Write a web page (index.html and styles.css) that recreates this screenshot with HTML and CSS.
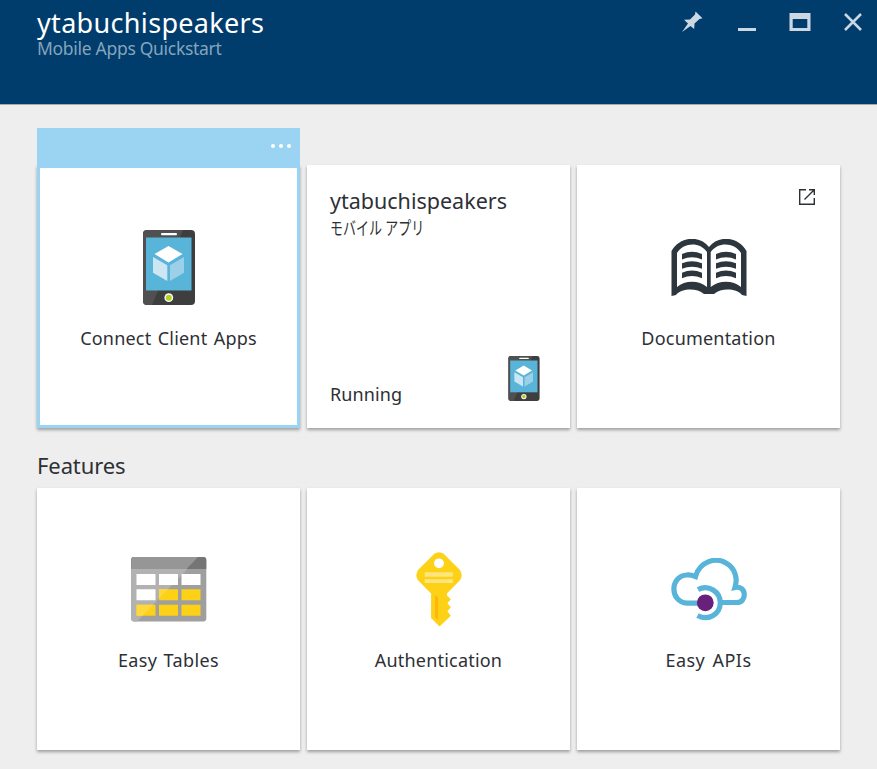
FILE: index.html
```html
<!DOCTYPE html>
<html lang="ja">
<head>
<meta charset="utf-8">
<title>ytabuchispeakers</title>
<link rel="stylesheet" href="styles.css">
</head>
<body>
<svg class="defs" width="0" height="0" aria-hidden="true">
  <symbol id="phone" viewBox="0 0 52 75">
    <rect width="52" height="75" rx="4" fill="#3e3e3e"/>
    <path d="M4 0H40L9 75H4a4 4 0 0 1-4-4V4a4 4 0 0 1 4-4z" fill="#505050"/>
    <rect x="3" y="7.500" width="45.500" height="53" fill="#59b4d9"/>
    <rect x="18" y="3" width="16" height="2.200" rx="1" fill="#fff"/>
    <path d="M25.500 16L39.500 24L25.500 32.500L11.500 24z" fill="#fff"/>
    <path d="M10 27L24.300 35.300V51L10 42.700z" fill="#cde6f4"/>
    <path d="M41 27L27 35.300V51L41 42.700z" fill="#9bd0e8"/>
    <circle cx="25.800" cy="67.700" r="4.400" fill="#fff"/>
    <circle cx="25.800" cy="67.700" r="3" fill="#b0d02b"/>
  </symbol>
</svg>
<header class="header">
  <div class="heading">
    <h1 class="title">ytabuchispeakers</h1>
    <p class="subtitle">Mobile Apps Quickstart</p>
  </div>
  <div class="controls">
    <svg class="pin" width="22" height="22" viewBox="0 0 22 22"><path d="M14.500 0.500L21.500 7.200L18.500 8L13.500 12.500L13.200 18L9.500 15L1 21L7 12.500L3 8.800L9 8.500L14 3.500z" fill="#ccd8e1"/></svg>
    <svg width="18" height="22" viewBox="0 0 18 22"><path d="M0 17H18V20H0z" fill="#ccd8e1"/></svg>
    <svg width="22" height="22" viewBox="0 0 22 22"><path d="M.5 2H21.500V20H.5zM3.700 8V17H18.300V8z" fill="#ccd8e1" fill-rule="evenodd"/></svg>
    <svg width="18" height="22" viewBox="0 0 18 22"><path d="M1 3L17 19M17 3L1 19" stroke="#ccd8e1" stroke-width="2.500"/></svg>
  </div>
</header>
<main class="content">
  <section class="grid">
    <article class="card selected">
      <div class="card-bar"><i></i><i></i><i></i></div>
      <svg class="icon phone" width="52" height="75"><use href="#phone"/></svg>
      <span class="label connect">Connect Client Apps</span>
    </article>
    <article class="card app">
      <h2 class="app-title">ytabuchispeakers</h2>
      <p class="app-type"><span>モバイル アプリ</span></p>
      <div class="app-foot">
        <span class="running">Running</span>
        <svg width="32" height="46" viewBox="0 0 32 46"><use href="#phone" width="32" height="45"/></svg>
      </div>
    </article>
    <article class="card">
      <svg class="external" width="18" height="18" viewBox="0 0 18 18" fill="none" stroke="#2d3035" stroke-width="1.400"><path d="M8 1.700H1.700V16.300H16.300V10M11 1.700H16.300V7M16 2L6.500 11.500"/></svg>
      <svg class="icon book" width="76" height="58" viewBox="0 0 76 58">
        <path d="M.5 12C9-3 29-4 38 8C47-4 67-3 75.500 12V57L71 56C65 49 50 49 43 55H33C26 49 11 49 5 56L.5 57z" fill="#2d363c"/>
        <path d="M6 14C13 3 29 3 36 13V48C28 41 14 41 6 48zM39.700 13C47 3 63 3 70 14V48C62 41 48 41 39.700 48z" fill="#fff"/>
        <path id="lines" d="M11 15Q21 10.500 31 15V20.500Q21 16 11 20.500zM11 24.300Q21 20 31 24.300V29.800Q21 25.500 11 29.800zM11 33.700Q21 29.500 31 33.700V39.200Q21 35 11 39.200z" fill="#2d363c"/>
        <use href="#lines" x="34"/>
      </svg>
      <span class="label documentation">Documentation</span>
    </article>
  </section>
  <h2 class="section-title">Features</h2>
  <section class="grid features">
    <article class="card">
      <svg class="icon table" width="76" height="65" viewBox="0 0 76 65">
        <rect x=".3" width="75" height="64.500" rx="3" fill="#9f9f9f"/>
        <path d="M3 0H68L6 64.500H3a3 3 0 0 1-3-3V3a3 3 0 0 1 3-3z" fill="#b2b2b2"/>
        <path d="M.3 12V3a3 3 0 0 1 3-3H72.300a3 3 0 0 1 3 3V12z" fill="#757575"/>
        <path d="M.3 12V3a3 3 0 0 1 3-3H67L55.500 12z" fill="#969696"/>
        <path d="M5.500 17H24.500V28H5.500zM28 17H47V28H28zM50.500 17H69.500V28H50.500zM5.500 32.300H24.500V43.300H5.500z" fill="#fff"/>
        <path d="M28 32.300H47V43.300H28zM50.500 32.300H69.500V43.300H50.500zM5.500 47.700H24.500V58.700H5.500zM28 47.700H47V58.700H28zM50.500 47.700H69.500V58.700H50.500z" fill="#fcd116"/>
        <path d="M5.500 47.700H22L11.500 58.700H5.500zM28 32.300H37L28 41.300z" fill="#ffd83e"/>
      </svg>
      <span class="label tables">Easy Tables</span>
    </article>
    <article class="card">
      <svg class="icon key" width="48" height="75" viewBox="0 0 48 76">
        <path d="M19 2Q24-1.500 29 2L45 18Q49 23.500 45 29L32 42V44L36 48L32.500 52L36 56L32.500 60L36 64.500L24.500 75.500L16 67V42L3 29Q-1 23.500 3 18z" fill="#fcd116"/>
        <circle cx="24" cy="11.500" r="5" fill="#fff"/>
        <path d="M9.500 20.500H38V25H9.500zM9.500 27.500H38V31.500H9.500z" fill="#ffe57d"/>
        <path d="M20 44L23 45.500V69L20 66z" fill="#ffb510"/>
      </svg>
      <span class="label auth">Authentication</span>
    </article>
    <article class="card">
      <svg class="icon cloud" width="76" height="64" viewBox="0 0 76 64" fill="none" stroke="#59b4d9" stroke-width="5.200">
        <path d="M28 45.200H16C-1.500 44 -1.500 18 16 17C19 16.800 21 17.200 24.500 18.500C29 3 45-1 55 5C64 10 67 20 64 29.500C76 27 76 44.500 66 44.500H49"/>
        <path d="M27 31.500C38 26 49 34 49.300 44.500C49.300 56 38 63.500 26.500 57.500"/>
        <circle cx="34.300" cy="44.800" r="8.400" fill="#68217a" stroke="none"/>
      </svg>
      <span class="label apis">Easy APIs</span>
    </article>
  </section>
</main>
</body>
</html>
```

FILE: styles.css
```css
* { box-sizing: border-box; }
body {
  margin: 0;
  min-height: 769px;
  background: #eee;
  color: #2d3035;
  font-family: "Noto Sans", "Noto Sans CJK JP", sans-serif;
}
h1, h2, p { margin: 0; font-weight: 400; white-space: nowrap; }
svg { display: block; flex: none; }
.defs { position: absolute; }

.header {
  display: flex;
  justify-content: space-between;
  height: 105px;
  padding: 8px 15px 0 37px;
  background: #003c6c;
  border-bottom: 1px solid #aaa9ac;
}
.title { color: #fff; font-size: 27px; line-height: 30px; letter-spacing: .32px; }
.subtitle { color: #84a5bc; font-size: 17.5px; line-height: 20px; letter-spacing: -.3px; }
.controls { display: flex; gap: 33px; padding-top: 3px; }
.pin { margin-right: 2px; }

.content { padding: 60px 37px 0; }
.grid { display: grid; grid-template-columns: repeat(3, 263px); gap: 7px; }
.card {
  position: relative;
  display: flex;
  flex-direction: column;
  align-items: center;
  height: 263px;
  background: #fff;
  box-shadow: 0 2px 3px rgba(0, 0, 0, .34);
}
.features .card { height: 262px; }
.selected { border: 3px solid #9bd4f3; border-top: 0; }
.card-bar {
  position: absolute;
  top: -37px;
  left: -3px;
  display: flex;
  justify-content: flex-end;
  gap: 4px;
  width: 263px;
  height: 40px;
  padding: 16px 9px 0;
  background: #9bd4f3;
}
.card-bar i { width: 4px; height: 4px; border-radius: 50%; background: #fff; }

.icon { margin-top: 65px; }
.book { margin-top: 74px; }
.table { margin-top: 69px; }
.key { margin-top: 64px; }
.cloud { margin-top: 70px; }
.label {
  position: absolute;
  top: 161px;
  left: 0;
  right: 0;
  text-align: center;
  font-size: 18px;
  line-height: 24px;
  letter-spacing: .2px;
  white-space: nowrap;
}
.features .label { top: 160px; }
.connect { word-spacing: 1.5px; }
.features .tables { letter-spacing: .4px; word-spacing: 1px; }
.features .apis { letter-spacing: .5px; word-spacing: 2px; }
.external { position: absolute; top: 23px; right: 24px; }

.app { align-items: stretch; padding: 22px 30px 26px 23px; }
.app-title { font-size: 21.5px; line-height: 28px; }
.app-type { font-size: 18px; line-height: 26px; }
.app-type span { display: inline-block; transform: scaleX(.72); transform-origin: 0 50%; }
.app-foot { display: flex; justify-content: space-between; margin-top: auto; }
.running { padding-top: 26px; font-size: 18px; line-height: 24px; height: 46px; letter-spacing: .1px; }
.section-title { height: 60px; padding-top: 22px; font-size: 22px; line-height: 30px; letter-spacing: -.1px; }
```
